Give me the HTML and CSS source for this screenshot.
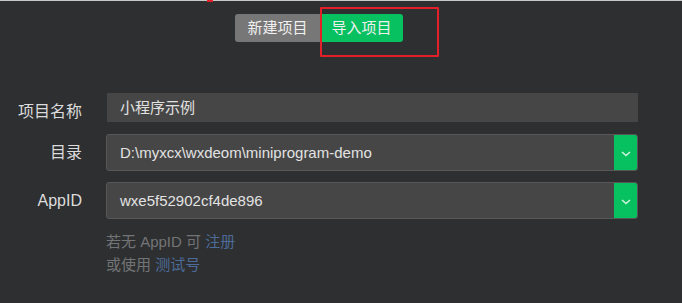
FILE: index.html
```html
<!DOCTYPE html>
<html lang="zh-CN">
<head>
  <meta charset="UTF-8" />
  <title>导入项目</title>
  <meta name="viewport" content="width=device-width,initial-scale=1" />
  <link rel="stylesheet" href="styles.css">
</head>
<body>
    <span class="mark"></span>
    <div class="page">
        <!-- new / import switch -->
        <div class="tabs">
            <span class="tab tab-new">新建项目</span>
            <span class="tab tab-import">导入项目</span>
        </div>
        <div class="highlight"></div>

        <form class="form">
            <div class="row row-name">
                <label class="label">项目名称</label>
                <div class="field field-plain">小程序示例</div>
            </div>
            <div class="row">
                <label class="label">目录</label>
                <div class="field field-select">
                    <span class="value">D:\myxcx\wxdeom\miniprogram-demo</span>
                    <span class="drop">
                        <svg width="10" height="6" viewBox="0 0 10 6"><path d="M1 1l4 3.5L9 1" fill="none" stroke="#cdf3dc" stroke-width="1.6"/></svg>
                    </span>
                </div>
            </div>
            <div class="row">
                <label class="label label-latin">AppID</label>
                <div class="field field-select">
                    <span class="value">wxe5f52902cf4de896</span>
                    <span class="drop">
                        <svg width="10" height="6" viewBox="0 0 10 6"><path d="M1 1l4 3.5L9 1" fill="none" stroke="#cdf3dc" stroke-width="1.6"/></svg>
                    </span>
                </div>
            </div>
            <div class="hints">
                <p>若无 AppID 可 <a href="#">注册</a></p>
                <p>或使用 <a href="#">测试号</a></p>
            </div>
        </form>
    </div>
</body>
</html>
```

FILE: styles.css
```css
body {
    margin: 0;
    background-color: #2e2f31;
    border-top: 1px solid #c9c9c9;
    font-family: "Liberation Sans", "Noto Sans CJK SC", sans-serif;
    color: #dedede;
}

/* leftover annotation bits from the screenshot */
.mark {
    position: absolute;
    left: 207px;
    top: 0;
    width: 6px;
    height: 2px;
    background-color: #e3202a;
}

.page {
    position: relative;
    width: 638px;
    padding-top: 13px;
}

.highlight {
    position: absolute;
    left: 320px;
    top: 6px;
    width: 115px;
    height: 46px;
    border: 2px solid #e3202a;
    border-radius: 1px;
}

.tabs {
    display: flex;
    justify-content: center;
}

.tab {
    height: 28px;
    line-height: 28px;
    font-size: 15px;
    color: #f0f0f0;
    text-align: center;
}

.tab-new {
    width: 85px;
    background-color: #777;
    border-radius: 3px 0 0 3px;
}

.tab-import {
    width: 83px;
    background-color: #07c160;
    border-radius: 0 3px 3px 0;
}

.form {
    margin-top: 51px;
}

.row {
    display: flex;
    align-items: flex-start;
    gap: 24px;
    margin-bottom: 11px;
}

.row-name {
    margin-bottom: 4px;
}

.label {
    width: 82px;
    flex-shrink: 0;
    text-align: right;
    font-size: 16px;
    line-height: 37px;
    color: #dcdcdc;
}

.field {
    width: 532px;
    box-sizing: border-box;
    font-size: 15px;
    color: #e2e2e2;
    background-color: #464646;
}

.field-plain {
    height: 29px;
    line-height: 29px;
    padding-left: 13px;
    margin-left: 1px;
    width: 531px;
}

.field-select {
    display: flex;
    height: 37px;
    border: 1px solid #575757;
    border-radius: 3px;
    overflow: hidden;
}

.field-select .value {
    flex: 1;
    line-height: 35px;
    padding-left: 13px;
}

.drop {
    width: 23px;
    background-color: #07c160;
    display: flex;
    align-items: center;
    justify-content: center;
    padding-top: 2px;
}

.hints {
    margin: 5px 0 0 106px;
    font-size: 15px;
    line-height: 23px;
    color: #737476;
}

.hints p {
    margin: 0;
}

.hints a {
    color: #4d6b98;
    text-decoration: none;
}
```
